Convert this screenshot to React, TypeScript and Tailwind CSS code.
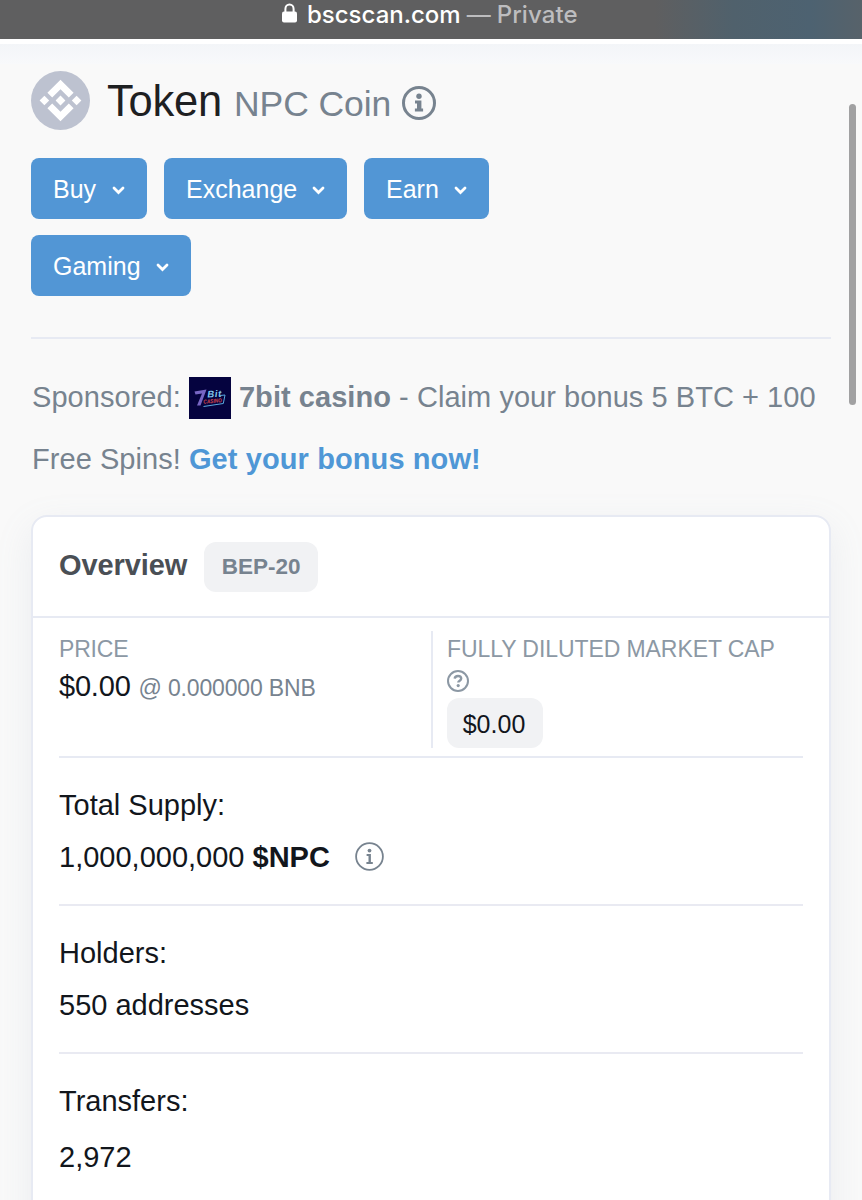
import type { ReactNode } from "react";

const menuItems = [
  { label: "Buy", width: "w-[116px]" },
  { label: "Exchange", width: "w-[183px]" },
  { label: "Earn", width: "w-[125px]" },
  { label: "Gaming", width: "w-[160px]" },
];

function ChevronIcon() {
  return (
    <svg width="13" height="9" viewBox="0 0 13 9" fill="none" className="mt-px">
      <path d="M2 2 L6.5 6.5 L11 2" stroke="currentColor" strokeWidth="2.8" strokeLinecap="round" />
    </svg>
  );
}

function InfoIcon({ className }: { className?: string }) {
  return (
    <svg width="34" height="34" viewBox="0 0 34 34" fill="none" className={className}>
      <circle cx="17" cy="17" r="15.5" stroke="currentColor" strokeWidth="3" />
      <circle cx="17" cy="10.3" r="2.7" fill="currentColor" />
      <path d="M13 14.4H19.4v8.2h1.7v3h-8.2v-3H15v-5.2H13z" fill="currentColor" />
    </svg>
  );
}

function ThinInfoIcon() {
  return (
    <svg width="29" height="29" viewBox="0 0 29 29" fill="none">
      <circle cx="14.5" cy="14.5" r="13.4" stroke="currentColor" strokeWidth="1.8" />
      <circle cx="14.5" cy="8.6" r="1.9" fill="currentColor" />
      <path d="M11.6 12H15.9v8h1.9v2h-6.4v-2h2.1v-6h-1.9z" fill="currentColor" />
    </svg>
  );
}

function QuestionIcon() {
  return (
    <svg width="22" height="22" viewBox="0 0 22 22" fill="none">
      <circle cx="11" cy="11" r="10" stroke="currentColor" strokeWidth="2" />
      <path
        d="M7.7 8.6C7.9 6.9 9.2 6 11 6c1.8 0 3.2 1 3.2 2.6 0 2.2-2.9 2-2.9 4"
        stroke="currentColor"
        strokeWidth="2.4"
      />
      <circle cx="11.2" cy="15.6" r="1.6" fill="currentColor" />
    </svg>
  );
}

function BnbLogo() {
  return (
    <svg width="59" height="59" viewBox="0 0 59 59" fill="#fff" className="shrink-0">
      <circle cx="29.5" cy="29.5" r="29.5" fill="#bdc2d0" />
      <path d="M29.5 8.7 42.6 21.8 37.8 26.6 29.5 18.3 21.2 26.6 16.4 21.8z" />
      <path d="M29.5 50.3 42.6 37.2 37.8 32.4 29.5 40.7 21.2 32.4 16.4 37.2z" />
      <path d="M13.4 24.7 18.2 29.5 13.4 34.3 8.6 29.5z" />
      <path d="M45.6 24.7 50.4 29.5 45.6 34.3 40.8 29.5z" />
      <path d="M29.5 24.6 34.4 29.5 29.5 34.4 24.6 29.5z" />
    </svg>
  );
}

function CasinoLogo() {
  return (
    <svg width="42" height="42" viewBox="0 0 42 42" className="mr-2 inline-block align-[-12px]">
      <rect width="42" height="42" fill="#05033f" />
      <path d="M5.5 14.5 17.5 12.5 11.5 28.5H8L13 16.5 6.5 17.5z" fill="#7866c4" />
      <text x="18.5" y="20.5" transform="rotate(-3 18.5 20.5)" fontSize="9.5" fontWeight="700" fontStyle="italic" fill="#83c9ee" textLength="14">
        Bit
      </text>
      <text x="14.5" y="26.8" transform="rotate(-5 14.5 26.8)" fontSize="5.8" fontWeight="700" fontStyle="italic" fill="#d6474e" textLength="18.5" lengthAdjust="spacingAndGlyphs">
        CASINO
      </text>
      <path d="M31 18.5 36 18 34.3 26.5 14.5 29.5" fill="none" stroke="#5aa9de" strokeWidth="1" />
    </svg>
  );
}

function StatRow({ label, children, last }: { label: string; children: ReactNode; last?: boolean }) {
  return (
    <div className={last ? "pt-[21px]" : "h-[148px] border-b-2 border-[#e9eaf2] pt-[21px]"}>
      <div className="h-[52px] leading-[52px]">{label}</div>
      <div className={last ? "flex h-[62px] items-center" : "flex h-[54px] items-center"}>{children}</div>
    </div>
  );
}

export default function App() {
  return (
    <div className="relative h-[1200px] overflow-hidden bg-[#f9f9f9] font-['Liberation_Sans',Arial,sans-serif] text-[29px] text-[#12161c]">
      <header className="flex h-[39px] items-start bg-[linear-gradient(90deg,#5f5f60_0%,#5f5f60_76%,#50616c_85%,#4d6271_94%,#57626a_100%)] pl-[282px] font-['Inter',sans-serif] text-[24px] leading-[30px]">
        <svg width="15" height="20" viewBox="0 0 15 20" className="mt-[3px] mr-[10px]">
          <path d="M3.4 10V5.9a4.1 4.4 0 0 1 8.2 0V10" fill="none" stroke="#fff" strokeWidth="2" />
          <rect x="0" y="8.6" width="15" height="11" rx="2" fill="#fff" />
        </svg>
        <span className="font-medium text-white">bscscan.com</span>
        <span className="ml-[6px] text-[#bdbdbf]">—</span>
        <span className="ml-[6px] font-medium tracking-[0.1px] text-[#bdbdbf]">Private</span>
      </header>
      <div className="h-[5px] bg-white" />
      <div className="h-[20px] bg-[linear-gradient(180deg,#f3f5f8,#f8f9fb)]" />

      <main className="px-[31px]">
        <div className="flex h-[73px] items-center">
          <BnbLogo />
          <h1 className="mt-[3px] ml-[17px] flex items-baseline whitespace-nowrap">
            <span className="text-[43.5px] tracking-[-0.2px] text-[#1e2022]">Token</span>
            <span className="ml-[12px] text-[35.5px] tracking-[-0.1px] text-[#77838f]">NPC Coin</span>
          </h1>
          <InfoIcon className="mt-[5px] ml-[11px] text-[#77838f]" />
        </div>

        <nav className="mt-[21px] flex w-[480px] flex-wrap gap-x-[17px] gap-y-[16px]">
          {menuItems.map((item) => (
            <button
              key={item.label}
              className={`${item.width} flex h-[61px] items-center justify-between rounded-[8px] bg-[#5296d5] px-[22px] pt-[2px] text-[25px] text-white`}
            >
              {item.label}
              <ChevronIcon />
            </button>
          ))}
        </nav>

        <div className="mt-[41px] h-[2px] bg-[#e7eaf3]" />

        <p className="mt-[27px] pl-px leading-[62px] tracking-[0.05px] whitespace-nowrap text-[#77838f]">
          Sponsored: <CasinoLogo />
          <b>7bit casino</b> - Claim your bonus 5 BTC + 100
          <br />
          Free Spins! <b className="tracking-[0.1px] text-[#4f97d6]">Get your bonus now!</b>
        </p>

        <section className="mt-[25px] h-[800px] rounded-[16px] border-2 border-[#e7eaf3] bg-white shadow-[0_12px_36px_rgba(140,152,180,0.13)]">
          <div className="flex h-[101px] items-center border-b-2 border-[#e7eaf3] px-[26px]">
            <h2 className="-mt-[2px] font-bold tracking-[-0.1px] text-[#4a4f55]">Overview</h2>
            <span className="mt-px ml-[17px] flex h-[50px] w-[114px] items-center justify-center rounded-[12px] bg-[#f1f2f4] text-[22.5px] font-bold text-[#77838f]">
              BEP-20
            </span>
          </div>

          <div className="px-[26px]">
            <div className="flex h-[140px] border-b-2 border-[#e7eaf3] pt-[13px]">
              <div className="w-[372px] pt-[5px]">
                <div className="text-[23px] leading-[26px] tracking-[-0.2px] text-[#8c98a4]">PRICE</div>
                <div className="mt-[4px] leading-[40px] tracking-[-0.2px]">
                  $0.00 <span className="text-[23px] tracking-[-0.15px] text-[#77838f]">@ 0.000000 BNB</span>
                </div>
              </div>
              <div className="h-[117px] border-l-2 border-[#e7eaf3] pt-[5px] pl-[14px]">
                <div className="text-[23px] leading-[26px] tracking-[-0.08px] whitespace-nowrap text-[#8c98a4]">
                  FULLY DILUTED MARKET CAP
                </div>
                <div className="mt-[8px] text-[#8c98a4]">
                  <QuestionIcon />
                </div>
                <span className="mt-[6px] flex h-[50px] w-[96px] items-center justify-center rounded-[12px] bg-[#f1f2f4] pt-[3px] pr-[2px] text-[25px]">
                  $0.00
                </span>
              </div>
            </div>

            <StatRow label="Total Supply:">
              1,000,000,000&nbsp;<b>$NPC</b>
              <span className="-mt-[3px] ml-[25px] text-[#77838f]">
                <ThinInfoIcon />
              </span>
            </StatRow>
            <StatRow label="Holders:">550 addresses</StatRow>
            <StatRow label="Transfers:" last>
              2,972
            </StatRow>
          </div>
        </section>
      </main>

      <div className="absolute top-[104px] right-[6px] h-[301px] w-[7px] rounded-full bg-[#a1a1a2]" />
    </div>
  );
}
